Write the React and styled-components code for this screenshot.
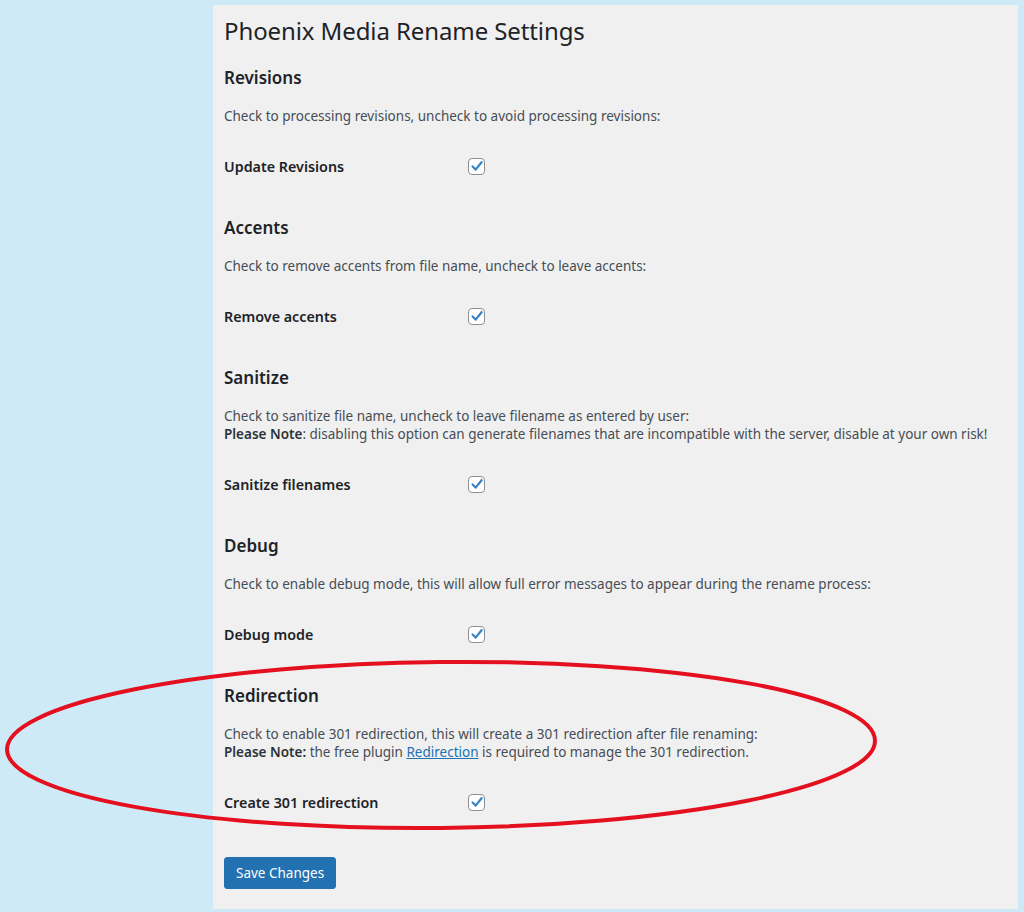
import React from 'react';
import styled, { createGlobalStyle } from 'styled-components';

const GlobalStyle = createGlobalStyle`
	html, body {
		margin: 0;
		padding: 0;
		background: #cdeaf6;
	}
	body {
		font-family: 'Noto Sans', 'Open Sans', sans-serif;
		-webkit-font-smoothing: antialiased;
	}
`;

const Page = styled.div`
	position: relative;
	width: 1024px;
	height: 912px;
	padding-top: 5px;
	box-sizing: border-box;
`;

const Panel = styled.div`
	margin-left: 213px;
	width: 805px;
	height: 904px;
	box-sizing: border-box;
	background: #f0f0f1;
	padding: 9px 11px 0 11px;
	color: #3c434a;
`;

const Title = styled.h1`
	margin: 0 0 19px 0;
	font-size: 24px;
	font-weight: 400;
	line-height: 33px;
	color: #1d2327;
	letter-spacing: -0.1px;
`;

const Section = styled.section`
	margin-bottom: 33px;
`;

const Heading = styled.h2`
	margin: 0 0 17px 0;
	font-size: 17px;
	font-weight: 600;
	line-height: 24px;
	color: #1d2327;
`;

const Description = styled.p`
	margin: 0 0 24px 0;
	font-size: 13.5px;
	line-height: 18px;
	color: #474d54;
`;

const Strong = styled.strong`
	font-weight: 600;
	color: #2c3338;
`;

const Link = styled.a`
	color: #2271b1;
	text-decoration: underline;
`;

const Row = styled.div`
	display: flex;
	align-items: center;
	height: 34px;
`;

const Label = styled.label`
	width: 244px;
	font-size: 14.3px;
	font-weight: 600;
	color: #1d2327;
`;

const Checkbox = styled.span`
	display: inline-flex;
	align-items: center;
	justify-content: center;
	width: 15px;
	height: 15px;
	background: #fff;
	border: 1px solid #8c8f94;
	border-radius: 4px;
	box-sizing: content-box;
`;

const SaveButton = styled.button`
	margin-top: 5px;
	height: 32px;
	padding: 0 11px;
	background: #2271b1;
	border: 1px solid #2271b1;
	border-radius: 3px;
	color: #fff;
	font-family: 'Noto Sans', 'Open Sans', sans-serif;
	font-size: 13.5px;
	line-height: 30px;
	cursor: pointer;
`;

const Annotation = styled.svg`
	position: absolute;
	top: 0;
	left: 0;
	pointer-events: none;
`;

function Tick() {
	return (
		<svg width='14' height='14' viewBox='0 0 14 14'>
			<path
				d='M2.6 7.4 L5.6 10.6 L11.6 3.2'
				fill='none'
				stroke='#3582c4'
				strokeWidth='2.2'
				strokeLinecap='round'
				strokeLinejoin='round'
			/>
		</svg>
	);
}

const sections = [
	{
		title: 'Revisions',
		desc: 'Check to processing revisions, uncheck to avoid processing revisions:',
		label: 'Update Revisions',
	},
	{
		title: 'Accents',
		desc: 'Check to remove accents from file name, uncheck to leave accents:',
		label: 'Remove accents',
	},
	{
		title: 'Sanitize',
		desc: 'Check to sanitize file name, uncheck to leave filename as entered by user:',
		note: (
			<>
				<Strong>Please Note</Strong>: disabling this option can generate filenames that are
				incompatible with the server, disable at your own risk!
			</>
		),
		label: 'Sanitize filenames',
	},
	{
		title: 'Debug',
		desc: 'Check to enable debug mode, this will allow full error messages to appear during the rename process:',
		label: 'Debug mode',
	},
	{
		title: 'Redirection',
		desc: 'Check to enable 301 redirection, this will create a 301 redirection after file renaming:',
		note: (
			<>
				<Strong>Please Note:</Strong> the free plugin <Link href='#'>Redirection</Link> is required
				to manage the 301 redirection.
			</>
		),
		label: 'Create 301 redirection',
	},
];

export default function App() {
	return (
		<Page>
			<GlobalStyle />
			<Panel>
				<Title>Phoenix Media Rename Settings</Title>
				{sections.map((s) => (
					<Section key={s.title}>
						<Heading>{s.title}</Heading>
						<Description>
							{s.desc}
							{s.note && <br />}
							{s.note}
						</Description>
						<Row>
							<Label>{s.label}</Label>
							<Checkbox>
								<Tick />
							</Checkbox>
						</Row>
					</Section>
				))}
				<SaveButton>Save Changes</SaveButton>
			</Panel>
			<Annotation width='1024' height='912' viewBox='0 0 1024 912'>
				<ellipse
					cx='441'
					cy='745'
					rx='434'
					ry='83'
					transform='rotate(-0.6 441 745)'
					fill='none'
					stroke='#e5101f'
					strokeWidth='4'
				/>
			</Annotation>
		</Page>
	);
}
